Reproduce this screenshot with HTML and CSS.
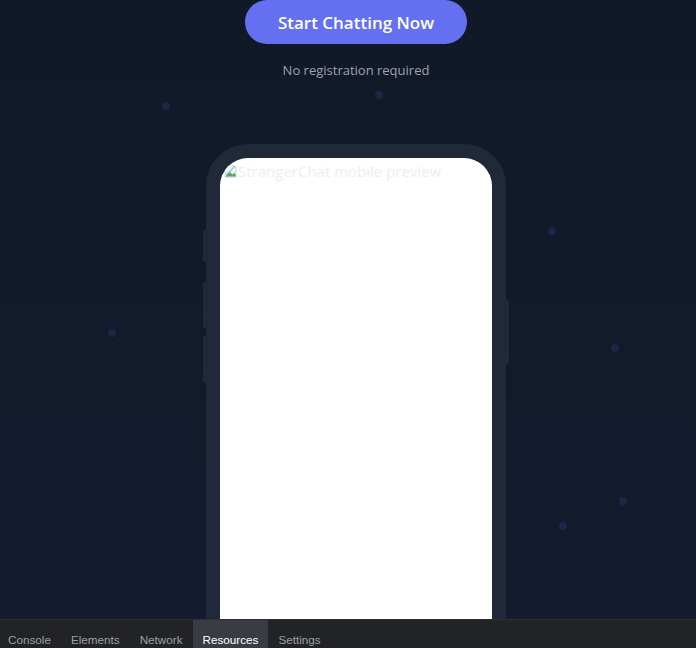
FILE: index.html
```html
<!DOCTYPE html>
<html lang="en">
<head>
<meta charset="utf-8">
<title>StrangerChat</title>
<link rel="stylesheet" href="styles.css">
</head>
<body>
<div class="page">
  <span class="dot d1"></span>
  <span class="dot d2"></span>
  <span class="dot d3"></span>
  <span class="dot d4"></span>
  <span class="dot d5"></span>
  <span class="dot d6"></span>
  <span class="dot d7"></span>
  <section class="hero">
    <a class="cta" href="#">Start Chatting Now</a>
    <p class="note">No registration required</p>
    <div class="phone">
      <span class="btn-side l1"></span>
      <span class="btn-side l2"></span>
      <span class="btn-side l3"></span>
      <span class="btn-side r1"></span>
      <div class="screen">
        <div class="broken">
          <svg class="broken-icon" width="14" height="16" viewBox="0 0 14 16">
            <path d="M1 2h8l3 3v9H1z" fill="#f4f6f8" stroke="#c9ced6" stroke-width="1"/>
            <path d="M1.5 13.5l4-5 3 3 2-2 1.5 4z" fill="#4caf50"/>
            <path d="M2 12L11 3" stroke="#9fc1e8" stroke-width="1.5"/>
          </svg>
          <span class="alt">StrangerChat mobile preview</span>
        </div>
      </div>
    </div>
  </section>
</div>
<nav class="devtools">
  <span class="tab">Console</span>
  <span class="tab">Elements</span>
  <span class="tab">Network</span>
  <span class="tab active">Resources</span>
  <span class="tab">Settings</span>
</nav>
</body>
</html>
```

FILE: styles.css
```css
html, body {
  margin: 0;
  padding: 0;
  height: 648px;
  overflow: hidden;
}
body {
  background: linear-gradient(180deg, #111827 0%, #141b2f 100%);
  font-family: "Noto Sans", "Open Sans", sans-serif;
}
.page {
  position: relative;
  height: 648px;
  overflow: hidden;
}
.dot {
  position: absolute;
  width: 8px;
  height: 8px;
  border-radius: 50%;
  background: #1d2647;
}
.d1 { left: 162px; top: 102px; }
.d2 { left: 375px; top: 91px; }
.d3 { left: 548px; top: 227px; }
.d4 { left: 108px; top: 329px; }
.d5 { left: 611px; top: 344px; }
.d6 { left: 619px; top: 497px; }
.d7 { left: 559px; top: 522px; }
.hero {
  display: flex;
  flex-direction: column;
  align-items: center;
  position: relative;
  padding-left: 16px;
}
.cta {
  display: flex;
  align-items: center;
  justify-content: center;
  width: 222px;
  height: 44px;
  border-radius: 22px;
  background: #6470ef;
  color: #ffffff;
  text-decoration: none;
  font-family: "Open Sans", "Noto Sans", sans-serif;
  font-weight: 600;
  font-size: 17px;
}
.note {
  margin: 16px 0 0;
  color: #9ca3af;
  font-size: 13px;
  line-height: 20px;
  font-family: "Open Sans", "Noto Sans", sans-serif;
}
.phone {
  position: relative;
  margin-top: 64px;
  width: 272px;
  height: 600px;
  border: 14px solid #1f2937;
  border-radius: 42px;
  background: #1f2937;
}
.btn-side {
  position: absolute;
  width: 3px;
  background: #1f2937;
}
.l1 { left: -17px; top: 72px; height: 32px; border-radius: 2px 0 0 2px; }
.l2 { left: -17px; top: 124px; height: 46px; border-radius: 2px 0 0 2px; }
.l3 { left: -17px; top: 178px; height: 46px; border-radius: 2px 0 0 2px; }
.r1 { right: -17px; top: 142px; height: 64px; border-radius: 0 2px 2px 0; }
.screen {
  width: 272px;
  height: 600px;
  background: #ffffff;
  border-radius: 28px;
  overflow: hidden;
}
.broken {
  display: flex;
  align-items: center;
  padding: 4px 0 0 4px;
}
.broken-icon {
  flex: none;
}
.alt {
  color: #eceef1;
  font-size: 15px;
  line-height: 18px;
  font-family: "Open Sans", "Noto Sans", sans-serif;
}
.devtools {
  position: fixed;
  left: 0;
  right: 0;
  bottom: 0;
  height: 28px;
  display: flex;
  background: #222327;
  border-top: 1px solid #2d2f34;
  font-family: "Liberation Sans", Arial, sans-serif;
  font-size: 11.7px;
}
.tab {
  display: flex;
  align-items: center;
  padding: 10px 10px 0;
  color: #9aa0a6;
}
.tab:first-child { padding-left: 8px; }
.tab.active {
  background: #393c43;
  color: #ffffff;
}
```
